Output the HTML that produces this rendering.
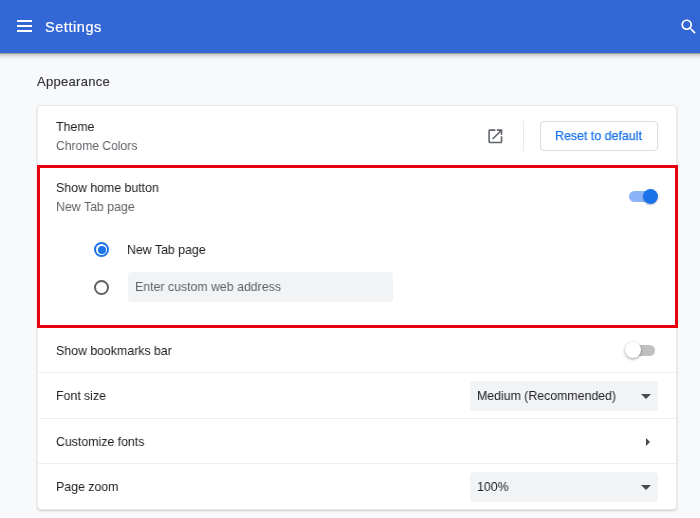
<!DOCTYPE html>
<html><head><meta charset="utf-8">
<style>
*{box-sizing:border-box;margin:0;padding:0}
html,body{width:700px;height:518px;overflow:hidden}
body{-webkit-font-smoothing:antialiased;font-family:"Liberation Sans",sans-serif;background:#f8f9fa;position:relative;color:#202124}
.abs{position:absolute}
#hdr{left:-10px;top:0;width:720px;height:53px;background:#3367d6;box-shadow:0 1px 0 rgba(120,110,90,.4),0 2px 5px rgba(0,0,0,.3)}
.hb{left:27px;width:15px;height:2px;background:#fff}
#title{left:55px;top:18px;font-size:14.5px;letter-spacing:.55px;-webkit-text-stroke:.2px #fff;will-change:transform;color:#fff;line-height:18px}
#appear{left:37px;top:73.5px;will-change:transform;font-size:13px;letter-spacing:.3px;color:#333437;-webkit-text-stroke:.15px #333437;line-height:16px}
#card{left:37px;top:105px;width:640px;height:405px;background:#fff;border-radius:4px;border:1px solid #e9eaeb;box-shadow:0 1px 2px rgba(60,64,67,.25)}
.t,.s{font-size:13px;line-height:16px;white-space:nowrap;transform:scaleX(.948);transform-origin:0 0;will-change:transform}
.t{color:#202124}
.s{color:#5f6368}
.sep{left:38px;width:638px;height:1px;background:#eeeff0}
#btn{left:540px;top:121px;width:118px;height:30px;border:1px solid #dadce0;border-radius:4px}
#btnt{left:555px;top:128px;-webkit-text-stroke:.25px #1a73e8;will-change:transform;color:#1a73e8;font-size:13px;line-height:16px;white-space:nowrap;transform:scaleX(.955);transform-origin:0 0}
#red{left:37px;top:165px;width:641px;height:163px;border:3px solid #e8000f}
.sel{left:470px;width:188px;height:30px;background:#f1f3f4;border-radius:4px}
.arrow{width:0;height:0;border-left:5px solid transparent;border-right:5px solid transparent;border-top:5px solid #474a4d}
</style></head><body>
<div id="hdr" class="abs">
  <div class="abs hb" style="top:20px"></div>
  <div class="abs hb" style="top:25px"></div>
  <div class="abs hb" style="top:30px"></div>
  <div id="title" class="abs">Settings</div>
  <svg class="abs" style="left:689px;top:17px" width="19.5" height="19.5" viewBox="0 0 24 24"><path fill="#fff" d="M15.5 14h-.79l-.28-.27C15.41 12.59 16 11.11 16 9.5 16 5.91 13.090 3 9.5 3S3 5.91 3 9.5 5.91 16 9.5 16c1.61 0 3.09-.59 4.230-1.57l.27.28v.79l5 4.99L20.49 19l-4.99-5zm-6 0C7.01 14 5 11.99 5 9.5S7.01 5 9.5 5 14 7.01 14 9.5 11.990 14 9.5 14z"/></svg>
</div>
<div id="appear" class="abs">Appearance</div>
<div id="card" class="abs"></div>

<div class="abs t" style="left:56px;top:119px">Theme</div>
<div class="abs s" style="left:56px;top:138px;transform:scaleX(.93)">Chrome Colors</div>
<svg class="abs" style="left:485.67px;top:126.67px" width="18.67" height="18.67" viewBox="0 0 24 24"><path fill="#5f6368" d="M19 19H5V5h7V3H5c-1.11 0-2 .9-2 2v14c0 1.1.89 2 2 2h14c1.1 0 2-.9 2-2v-7h-2v7zM14 3v2h3.59l-9.83 9.83 1.41 1.41L19 6.41V10h2V3h-7z"/></svg>
<div class="abs" style="left:523px;top:121px;width:1px;height:30px;background:#e8eaed"></div>
<div id="btn" class="abs"></div>
<div id="btnt" class="abs">Reset to default</div>

<div class="abs t" style="left:56px;top:180px">Show home button</div>
<div class="abs s" style="left:56px;top:199px">New Tab page</div>
<div class="abs" style="left:629px;top:191px;width:26px;height:11px;border-radius:6px;background:#8ab4f8"></div>
<div class="abs" style="left:643px;top:189px;width:15px;height:15px;border-radius:8px;background:#1a73e8;box-shadow:0 1px 2px rgba(0,0,0,.25)"></div>

<div class="abs" style="left:94px;top:242px;width:15px;height:15px;border-radius:50%;border:2px solid #1a73e8"></div>
<div class="abs" style="left:97.5px;top:245.5px;width:8px;height:8px;border-radius:50%;background:#1a73e8"></div>
<div class="abs t" style="left:127px;top:242px">New Tab page</div>
<div class="abs" style="left:94px;top:280px;width:15px;height:15px;border-radius:50%;border:2px solid #5f6368"></div>
<div class="abs" style="left:128px;top:272px;width:265px;height:30px;background:#f1f3f4;border-radius:4px"></div>
<div class="abs s" style="left:135px;top:279px">Enter custom web address</div>
<div id="red" class="abs"></div>

<div class="abs t" style="left:56px;top:343px">Show bookmarks bar</div>
<div class="abs" style="left:629px;top:344.5px;width:26px;height:11px;border-radius:6px;background:#bfc0c2"></div>
<div class="abs" style="left:625px;top:342px;width:16px;height:16px;border-radius:8px;background:#fff;box-shadow:0 1px 3px rgba(0,0,0,.4)"></div>
<div class="abs sep" style="top:372px"></div>

<div class="abs t" style="left:56px;top:388px">Font size</div>
<div class="abs sel" style="top:381px"></div>
<div class="abs t" style="left:477px;top:388px">Medium (Recommended)</div>
<div class="abs arrow" style="left:641px;top:394px"></div>
<div class="abs sep" style="top:418px"></div>

<div class="abs t" style="left:56px;top:434px">Customize fonts</div>
<div class="abs" style="left:646px;top:438px;width:0;height:0;border-top:4px solid transparent;border-bottom:4px solid transparent;border-left:4px solid #474a4d"></div>
<div class="abs sep" style="top:463px"></div>

<div class="abs t" style="left:56px;top:479px">Page zoom</div>
<div class="abs sel" style="top:472px"></div>
<div class="abs t" style="left:477px;top:479px">100%</div>
<div class="abs arrow" style="left:641px;top:485px"></div>
</body></html>
